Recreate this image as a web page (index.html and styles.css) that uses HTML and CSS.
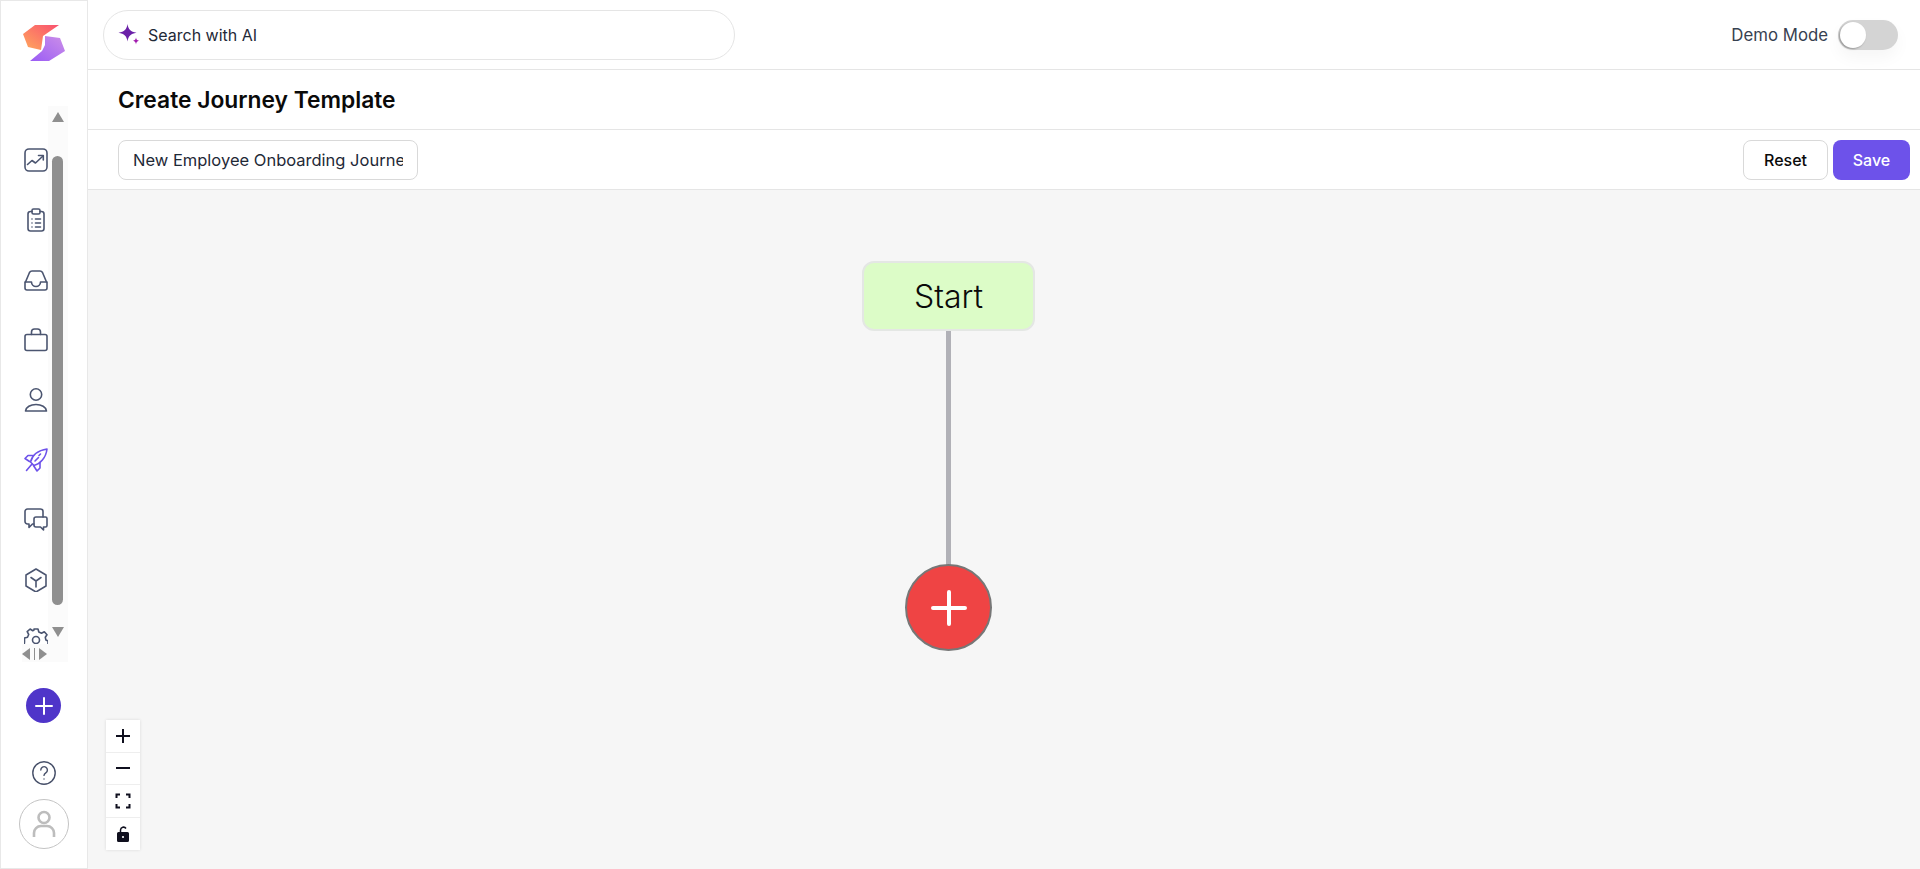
FILE: index.html
```html
<!DOCTYPE html>
<html lang="en">
<head>
  <meta charset="UTF-8" />
  <meta name="viewport" content="width=device-width, initial-scale=1" />
  <title>Create Journey Template</title>
  <link rel="stylesheet" href="styles.css">
</head>
<body>
  <aside class="sidebar">
    <div class="logo">
      <svg width="40" height="40" viewBox="0 0 40 40">
        <defs>
          <linearGradient id="logoWarm" x1="0" y1="1" x2="1" y2="0">
            <stop offset="0" stop-color="#ffa95c" />
            <stop offset="1" stop-color="#f9506f" />
          </linearGradient>
          <linearGradient id="logoCool" x1="0" y1="1" x2="1" y2="0">
            <stop offset="0" stop-color="#9a5cf5" />
            <stop offset="1" stop-color="#cc8fe8" />
          </linearGradient>
        </defs>
        <polygon points="13,0 37,0 21,11 19,25 6,22 1,9" fill="url(#logoWarm)" />
        <polygon points="23,11 38,13 43,26 27,36 8,36 20,26 23,20" fill="url(#logoCool)" />
      </svg>
    </div>

    <div class="nav-wrap">
      <nav class="nav">
        <a class="nav-item" href="#" aria-label="Analytics">
          <svg viewBox="0 0 24 24"><rect x="1" y="1" width="22" height="22" rx="4" /><path d="M3.5 16.5l4.5-4 3.5 2.5 7.5-7" /><path d="M14.5 7.5h4.8v4.5" /></svg>
        </a>
        <a class="nav-item" href="#" aria-label="Tasks">
          <svg viewBox="0 0 24 24"><path d="M8 3.5H6.5A2.5 2.5 0 0 0 4 6v14.5A2.5 2.5 0 0 0 6.5 23h11a2.5 2.5 0 0 0 2.5-2.5V6a2.5 2.5 0 0 0-2.5-2.5H16" /><rect x="8" y="1" width="8" height="5" rx="1.5" /><path d="M8 11h.01M8 15h.01M8 19h.01M11.5 11H16.5M11.5 15H16.5M11.5 19H16.5" /></svg>
        </a>
        <a class="nav-item" href="#" aria-label="Inbox">
          <svg viewBox="0 0 24 24"><path d="M1.5 14l4-9.5A3 3 0 0 1 8.3 3h7.4a3 3 0 0 1 2.8 1.5l4 9.5" /><path d="M1 14v6a2 2 0 0 0 2 2h18a2 2 0 0 0 2-2v-6h-6.5a4.5 4.5 0 0 1-9 0z" /></svg>
        </a>
        <a class="nav-item" href="#" aria-label="Jobs">
          <svg viewBox="0 0 24 24"><rect x="1" y="6.5" width="22" height="16" rx="2" /><path d="M7.5 6.5V4a3 3 0 0 1 3-3h3a3 3 0 0 1 3 3v2.5" /></svg>
        </a>
        <a class="nav-item" href="#" aria-label="People">
          <svg viewBox="0 0 24 24"><circle cx="12" cy="6.5" r="5.7" /><path d="M1.5 23c.5-4 5-6.5 10.5-6.5s10 2.5 10.5 6.5z" /></svg>
        </a>
        <a class="nav-item active" href="#" aria-label="Journeys">
          <svg viewBox="0 0 24 24"><path d="M6.5 14C8 8 13 2.5 23 1c-1 9-7 15-13 16.5z" /><path d="M8.5 7.5H4L1 10.5 5.5 13.5" /><path d="M16 15v5l-3 3-3.5-5.5" /><path d="M8 16l-5.5 6.5M11 13l3.5-3.5M15 7.5L16.500 6" /></svg>
        </a>
        <a class="nav-item" href="#" aria-label="Messages">
          <svg viewBox="0 0 24 24"><path d="M19 9V3.5A2.5 2.5 0 0 0 16.5 1h-13A2.5 2.5 0 0 0 1 3.5v10A2.5 2.5 0 0 0 3.5 16H5v3.5L8.5 16H10" /><path d="M12 9h9.5A1.5 1.5 0 0 1 23 10.500v7a1.500 1.500 0 0 1-1.500 1.500h-2v3L16.500 19H12a2 2 0 0 1-2-2v-6a2 2 0 0 1 2-2z" /></svg>
        </a>
        <a class="nav-item" href="#" aria-label="Assets">
          <svg viewBox="0 0 24 24"><path d="M12 1l10 6v11l-10 6-10-6V7z" /><path d="M7 9.5l5 3.5 5-3.5M12 13v6" /></svg>
        </a>
        <a class="nav-item" href="#" aria-label="Settings">
          <svg viewBox="0 0 24 24"><circle cx="12" cy="12" r="3.5" /><path d="M10 1h4l.8 3 2.7 1.200 2.800-1.500 2.700 3-1.700 2.600.6 2.700 2.100 1v4l-3 .8-1.200 2.700 1.500 2.800-2.900 2.700-2.700-1.700-2.700.6-.8 2.100h-4l-.8-3-2.700-1.200-2.800 1.500-2.700-3 1.700-2.600-.6-2.700L.5 14v-4l3-.8 1.200-2.700-1.500-2.800 2.900-2.700 2.700 1.700 1.200-.6z" /></svg>
        </a>
      </nav>
      <div class="scroll-y">
        <span class="arrow-up"></span>
        <span class="thumb"></span>
        <span class="arrow-down"></span>
      </div>
      <div class="scroll-x">
        <span class="arrow-left"></span>
        <span class="thumb-x"></span>
        <span class="arrow-right"></span>
      </div>
    </div>

    <button class="add-btn" aria-label="Add">
      <svg width="20" height="20" viewBox="0 0 20 20"><path d="M10 2v16M2 10h16" /></svg>
    </button>
    <a class="help" href="#" aria-label="Help">
      <svg width="24" height="24" viewBox="0 0 24 24"><circle cx="12" cy="12" r="11.2" /><path d="M8.8 9a3.3 3.3 0 1 1 5 2.800c-1.100.7-1.800 1.300-1.800 2.600" /><path d="M12 18h.01" /></svg>
    </a>
    <div class="avatar">
      <svg width="24" height="28" viewBox="0 0 24 28"><circle cx="12" cy="7.5" r="5.5" /><path d="M2 27v-4a7 7 0 0 1 7-7h6a7 7 0 0 1 7 7v4" /></svg>
    </div>
  </aside>

  <main class="main">
    <header class="topbar">
      <div class="search">
        <svg width="22" height="22" viewBox="0 0 22 22">
          <path d="M9.500 0c.9 5.500 3 7.800 9 8.800-6 1-8.100 3.200-9 8.700-.9-5.500-3-7.700-9-8.700 6-1 8.100-3.300 9-8.800z" fill="#6b21a8" />
          <path d="M18 13.500c.3 2 1 2.800 3 3.300-2 .5-2.700 1.300-3 3.700-.3-2.400-1-3.200-3-3.700 2-.5 2.700-1.300 3-3.300z" fill="#a21caf" />
        </svg>
        <span>Search with AI</span>
      </div>
      <div class="demo">
        <span>Demo Mode</span>
        <div class="switch"><span class="knob"></span></div>
      </div>
    </header>

    <div class="title-bar">
      <h1>Create Journey Template</h1>
    </div>

    <div class="toolbar">
      <input class="name-input" value="New Employee Onboarding Journey" />
      <div class="actions">
        <button class="btn">Reset</button>
        <button class="btn btn-primary">Save</button>
      </div>
    </div>

    <section class="canvas">
      <div class="edge"></div>
      <div class="node-start">Start</div>
      <button class="node-add" aria-label="Add step">
        <svg width="36" height="36" viewBox="0 0 36 36"><path d="M18 2v32M2 18h32" /></svg>
      </button>

      <div class="controls">
        <button class="control" aria-label="Zoom in">
          <svg width="16" height="16" viewBox="0 0 16 16"><path d="M8 1v14M1 8h14" /></svg>
        </button>
        <button class="control" aria-label="Zoom out">
          <svg width="16" height="16" viewBox="0 0 16 16"><path d="M1 8h14" /></svg>
        </button>
        <button class="control" aria-label="Fit view">
          <svg width="16" height="16" viewBox="0 0 16 16"><path d="M1.5 5V1.5H5M11 1.5h3.5V5M14.5 11v3.5H11M5 14.5H1.5V11" /></svg>
        </button>
        <button class="control" aria-label="Toggle interactivity">
          <svg class="lock" width="14" height="16" viewBox="0 0 14 16"><path d="M1 7.5A1.5 1.5 0 0 1 2.500 6h9A1.500 1.500 0 0 1 13 7.500v7a1.500 1.500 0 0 1-1.500 1.500h-9A1.500 1.500 0 0 1 1 14.500z" /><path class="shackle" d="M4.500 6V4a3 3 0 0 1 5.500-1.500" /><circle class="keyhole" cx="7" cy="11" r="1.1" /></svg>
        </button>
      </div>
    </section>
  </main>
</body>
</html>
```

FILE: styles.css
```css
* {
  box-sizing: border-box;
  margin: 0;
  padding: 0;
}
html, body {
  height: 100%;
}
body {
  display: flex;
  height: 869px;
  overflow: hidden;
  font-family: Inter, 'Noto Sans', sans-serif;
  color: #111827;
  background: #fff;
}
button {
  font-family: inherit;
  cursor: pointer;
}

/* sidebar */
.sidebar {
  position: relative;
  width: 88px;
  flex-shrink: 0;
  display: flex;
  flex-direction: column;
  align-items: center;
  border: 1px solid #e8e8e8;
}
.logo {
  height: 105px;
  width: 100%;
  padding: 24px 0 0 21px;
}
.logo svg {
  overflow: visible;
}
.nav-wrap {
  position: relative;
  width: 100%;
  height: 556px;
}
.nav {
  height: 538px;
  overflow: hidden;
  padding: 42px 0 0 23px;
  display: flex;
  flex-direction: column;
  gap: 36px;
}
.nav-item {
  display: block;
  width: 24px;
  height: 24px;
  flex-shrink: 0;
}
.nav-item svg {
  width: 24px;
  height: 24px;
  fill: none;
  stroke: #4b5570;
  stroke-width: 1.6;
  stroke-linecap: round;
  stroke-linejoin: round;
}
.nav-item.active svg {
  stroke: #6d52ea;
}
.scroll-y {
  position: absolute;
  top: 0;
  left: 47px;
  width: 20px;
  height: 538px;
  background: #fbfbfb;
}
.arrow-up, .arrow-down {
  position: absolute;
  left: 4px;
  width: 0;
  height: 0;
  border-left: 6.5px solid transparent;
  border-right: 6.5px solid transparent;
}
.arrow-up {
  top: 6px;
  border-bottom: 10px solid #8f8f8f;
}
.arrow-down {
  bottom: 7px;
  border-top: 10px solid #8f8f8f;
}
.thumb {
  position: absolute;
  top: 50px;
  left: 4px;
  width: 11px;
  height: 449px;
  background: #8f8f8f;
  border-radius: 6px;
}
.scroll-x {
  position: absolute;
  top: 538px;
  left: 21px;
  width: 46px;
  height: 18px;
  padding-top: 2px;
  background: #fbfbfb;
  display: flex;
  align-items: center;
  gap: 4px;
}
.arrow-left, .arrow-right {
  width: 0;
  height: 0;
  border-top: 6px solid transparent;
  border-bottom: 6px solid transparent;
}
.arrow-left {
  border-right: 8px solid #8f8f8f;
}
.arrow-right {
  border-left: 8px solid #8f8f8f;
}
.thumb-x {
  width: 1px;
  height: 12px;
  background: #8f8f8f;
}
.add-btn {
  width: 35px;
  height: 35px;
  margin: 26px 1px 0 0;
  border: none;
  border-radius: 50%;
  background: #4f35c9;
  display: flex;
  align-items: center;
  justify-content: center;
}
.add-btn svg path {
  stroke: #fff;
  stroke-width: 2;
  stroke-linecap: round;
}
.help {
  display: block;
  height: 24px;
  margin-top: 38px;
}
.help svg {
  fill: none;
  stroke: #475069;
  stroke-width: 1.4;
  stroke-linecap: round;
}
.avatar {
  width: 50px;
  height: 50px;
  margin-top: 14px;
  border: 1px solid #c4c4c4;
  border-radius: 50%;
  display: flex;
  align-items: center;
  justify-content: center;
}
.avatar svg {
  fill: none;
  stroke: #bdbdbd;
  stroke-width: 2.6;
}

/* header rows */
.main {
  flex: 1;
  display: flex;
  flex-direction: column;
  min-width: 0;
}
.topbar {
  height: 70px;
  flex-shrink: 0;
  display: flex;
  align-items: center;
  justify-content: space-between;
  padding: 1px 22px 0 15px;
  border-bottom: 1px solid #e5e5e5;
}
.search {
  width: 632px;
  height: 50px;
  display: flex;
  align-items: center;
  gap: 8px;
  padding-left: 14px;
  border: 1px solid #e5e5e5;
  border-radius: 25px;
  font-size: 16px;
  color: #1f2937;
}
.demo {
  display: flex;
  align-items: center;
  gap: 10px;
  font-size: 16.8px;
  color: #374151;
}
.switch {
  width: 60px;
  height: 30px;
  border-radius: 15px;
  background: #d4d4d4;
  padding: 1px 0 0 1px;
  box-shadow: 0 8px 16px rgba(0, 0, 0, 0.04);
}
.knob {
  display: block;
  width: 26px;
  height: 26px;
  margin: 1px 0 0 1px;
  border-radius: 50%;
  background: #fff;
  box-shadow: -1px 1px 2px rgba(0, 0, 0, 0.3);
}
.title-bar {
  height: 60px;
  flex-shrink: 0;
  display: flex;
  align-items: center;
  padding-left: 30px;
  border-bottom: 1px solid #e5e5e5;
}
.title-bar h1 {
  font-size: 22.8px;
  font-weight: 600;
  color: #0a0a0a;
}
.toolbar {
  height: 60px;
  flex-shrink: 0;
  display: flex;
  align-items: center;
  justify-content: space-between;
  padding: 1px 10px 0 30px;
  border-bottom: 1px solid #e5e5e5;
}
.name-input {
  width: 300px;
  height: 40px;
  padding: 0 14px;
  border: 1px solid #d9d9d9;
  border-radius: 8px;
  font-family: inherit;
  font-size: 16.5px;
  color: #1f2937;
  outline: none;
}
.actions {
  display: flex;
  gap: 5px;
}
.btn {
  width: 85px;
  height: 40px;
  border: 1px solid #d9d9d9;
  border-radius: 8px;
  background: #fff;
  font-size: 16px;
  font-weight: 450;
  color: #0a0a0a;
}
.btn-primary {
  width: 77px;
  border: none;
  background: #6d52ea;
  color: #fff;
}

/* journey canvas */
.canvas {
  position: relative;
  flex: 1;
  background: #f6f6f6;
}
.node-start {
  position: absolute;
  left: 774px;
  top: 71px;
  width: 173px;
  height: 70px;
  display: flex;
  align-items: center;
  justify-content: center;
  background: #dcfcc7;
  border: 2px solid #e4e7e4;
  border-radius: 12px;
  font-size: 32px;
  font-weight: 300;
  color: #0a0a0a;
}
.edge {
  position: absolute;
  left: 858px;
  top: 140px;
  width: 5px;
  height: 236px;
  background: #b1b1b7;
}
.node-add {
  position: absolute;
  left: 817px;
  top: 374px;
  width: 87px;
  height: 87px;
  border: 2px solid #777;
  border-radius: 50%;
  background: #ef4444;
  display: flex;
  align-items: center;
  justify-content: center;
}
.node-add svg path {
  stroke: #fff;
  stroke-width: 4;
  stroke-linecap: round;
}
.controls {
  position: absolute;
  left: 18px;
  bottom: 19px;
  width: 34px;
  background: #fff;
  box-shadow: 0 0 3px rgba(0, 0, 0, 0.12);
}
.control {
  display: flex;
  align-items: center;
  justify-content: center;
  width: 34px;
  height: 32.5px;
  background: #fff;
  border: none;
  border-bottom: 1px solid #eee;
}
.control:last-child {
  border-bottom: none;
}
.control svg path {
  fill: none;
  stroke: #0f0f1e;
  stroke-width: 2;
}
.control .lock path {
  fill: #0f0f1e;
  stroke: none;
}
.control .lock .shackle {
  fill: none;
  stroke: #0f0f1e;
  stroke-width: 1.5;
}
.keyhole {
  fill: #fff;
}
```
